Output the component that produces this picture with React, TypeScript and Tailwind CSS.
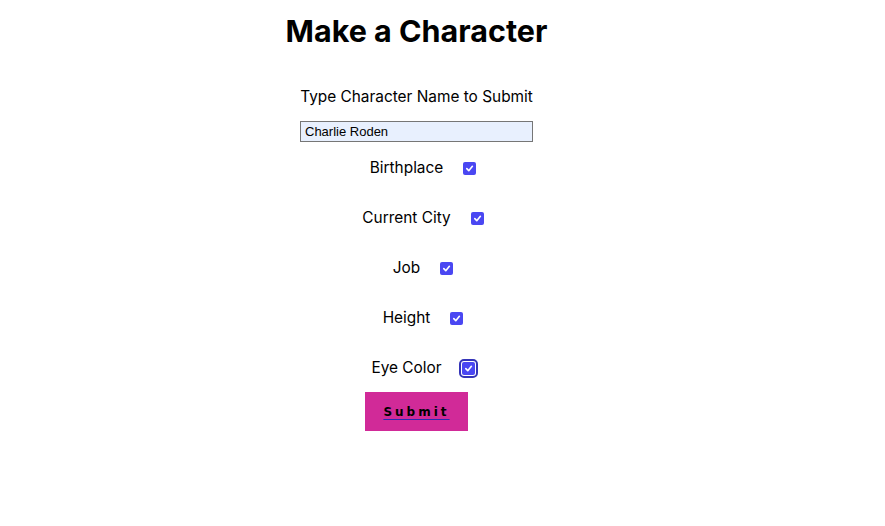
import React from 'react';

const fields = ['Birthplace', 'Current City', 'Job', 'Height', 'Eye Color'];

const Check = ({ focused }: { focused?: boolean }) => (
  <span
    className={
      'inline-flex w-[13px] h-[13px] items-center justify-center rounded-[2px] bg-[#4a47f2] ' +
      (focused ? 'outline-2 outline-[#3434b8] outline-offset-1' : '')
    }
  >
    <svg width="9" height="9" viewBox="0 0 10 10">
      <path d="M2 5.2 L4.2 7.4 L8.2 2.6" fill="none" stroke="white" strokeWidth="1.8" strokeLinecap="round" strokeLinejoin="round" />
    </svg>
  </span>
);

export default function App() {
  return (
    <div className="w-[833px] bg-white text-black font-['Inter',sans-serif] text-center pt-[11px] pb-[95px]">
      <h1 className="text-[30.5px] font-bold leading-[40px]">Make a Character</h1>

      <p className="mt-[36px] text-[15.4px] leading-[20px]">Type Character Name to Submit</p>

      <div className="mt-[14px] flex justify-center">
        <div className="w-[233px] h-[21px] border border-[#767676] bg-[#e8f0fe] text-left pl-[4px] text-[13px] leading-[19px] font-['Liberation_Sans',sans-serif]">
          Charlie Roden
        </div>
      </div>

      <div className="mt-[16px] flex flex-col gap-[30px] pl-[13px]">
        {fields.map((f, i) => (
          <div key={f} className="flex items-center justify-center gap-[20px] h-[20px] text-[15.4px]">
            <span>{f}</span>
            <Check focused={i === fields.length - 1} />
          </div>
        ))}
      </div>

      <div className="mt-[14px] flex justify-center">
        <button className="w-[103px] h-[39px] bg-[#d12a98] font-['DejaVu_Sans',sans-serif] font-bold text-[12px] tracking-[3px] underline decoration-[#2a2ab0] underline-offset-[3px]">
          Submit
        </button>
      </div>
    </div>
  );
}
